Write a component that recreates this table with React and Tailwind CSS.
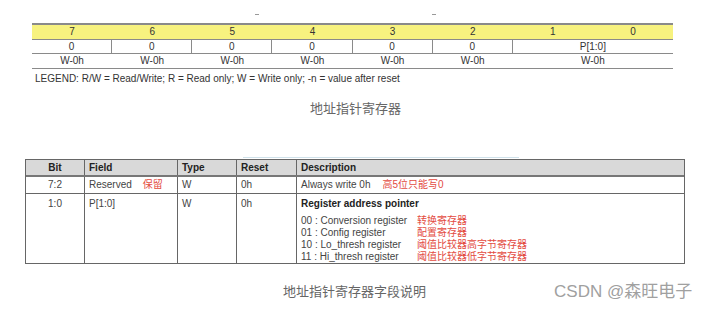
import React from "react";

const bits = ["7", "6", "5", "4", "3", "2", "1", "0"];

const pointerRows = [
  ["00 : Conversion register", "转换寄存器"],
  ["01 : Config register", "配置寄存器"],
  ["10 : Lo_thresh register", "阈值比较器高字节寄存器"],
  ["11 : Hi_thresh register", "阈值比较器低字节寄存器"],
];

function BitTable() {
  return (
    <div className="ml-[32px] w-[641px] border-t-2 border-b border-[#8a8a8a] text-[10px] leading-none text-[#333]">
      <div className="grid grid-cols-8 h-[14px] bg-[#f7f27f]">
        {bits.map((b) => (
          <div key={b} className="flex items-center justify-center">
            {b}
          </div>
        ))}
      </div>
      <div className="grid grid-cols-8 h-[14px] border-t border-[#8a8a8a]">
        {["0", "0", "0", "0", "0", "0"].map((v, i) => (
          <div
            key={i}
            className="flex items-center justify-center border-r border-[#8a8a8a]"
          >
            {v}
          </div>
        ))}
        <div className="col-span-2 flex items-center justify-center">P[1:0]</div>
      </div>
      <div className="grid grid-cols-8 h-[15px] border-t border-[#8a8a8a]">
        {[0, 1, 2, 3, 4, 5].map((i) => (
          <div key={i} className="flex items-center justify-center">
            W-0h
          </div>
        ))}
        <div className="col-span-2 flex items-center justify-center">W-0h</div>
      </div>
    </div>
  );
}

function FieldTable() {
  const cols = "grid grid-cols-[59px_93px_59px_60px_1fr]";
  const cell = "border-r border-[#666] px-[4px]";
  return (
    <div className="ml-[25px] w-[660px] border border-[#666] text-[10px] leading-none text-[#444]">
      <div className={`${cols} h-[17px] bg-[#d9d9d9] font-bold text-[#222] border-b-2 border-[#777]`}>
        <div className={`${cell} flex items-center justify-center`}>Bit</div>
        <div className={`${cell} flex items-center`}>Field</div>
        <div className={`${cell} flex items-center`}>Type</div>
        <div className={`${cell} flex items-center`}>Reset</div>
        <div className="px-[4px] flex items-center">Description</div>
      </div>
      <div className={`${cols} h-[17px] border-b border-[#666]`}>
        <div className={`${cell} flex items-center justify-center`}>7:2</div>
        <div className={`${cell} flex items-center`}>
          Reserved
          <span className="ml-[11px] text-[#e34b3f]">保留</span>
        </div>
        <div className={`${cell} flex items-center`}>W</div>
        <div className={`${cell} flex items-center`}>0h</div>
        <div className="px-[4px] flex items-center">
          Always write 0h
          <span className="ml-[12px] text-[#e34b3f]">高5位只能写0</span>
        </div>
      </div>
      <div className={`${cols} h-[69px]`}>
        <div className={`${cell} pt-[5px] text-center`}>1:0</div>
        <div className={`${cell} pt-[5px]`}>P[1:0]</div>
        <div className={`${cell} pt-[5px]`}>W</div>
        <div className={`${cell} pt-[5px]`}>0h</div>
        <div className="px-[4px] pt-[5px]">
          <div className="font-bold text-[#222]">Register address pointer</div>
          <div className="mt-[6px] flex flex-col">
            {pointerRows.map(([en, zh]) => (
              <div key={en} className="flex h-[12px] items-center">
                <span className="w-[116px]">{en}</span>
                <span className="text-[#e34b3f]">{zh}</span>
              </div>
            ))}
          </div>
        </div>
      </div>
    </div>
  );
}

export default function App() {
  return (
    <div
      className="w-[709px] h-[309px] bg-white overflow-hidden"
      style={{ fontFamily: '"Liberation Sans", "Noto Sans CJK SC", sans-serif' }}
    >
      <div className="h-[23px] flex items-start">
        <div className="ml-[255px] mt-[14px] w-[4px] h-px bg-[#999]" />
        <div className="ml-[173px] mt-[14px] w-[4px] h-px bg-[#999]" />
      </div>
      <BitTable />
      <div className="mt-[4px] ml-[35px] text-[10px] leading-[12px] text-[#333]">
        LEGEND: R/W = Read/Write; R = Read only; W = Write only; -n = value after reset
      </div>
      <div className="mt-[16px] ml-[310px] text-[13px] leading-[16px] text-[#666]">
        地址指针寄存器
      </div>
      <div className="mt-[40px] ml-[243px] w-[276px] h-px bg-[#cfe1ea]" />
      <div className="mt-[1px]">
        <FieldTable />
      </div>
      <div className="mt-[18px] flex items-center h-[20px]">
        <div className="ml-[283px] text-[13px] text-[#666]">地址指针寄存器字段说明</div>
        <div className="ml-[128px] text-[17px] text-[#a0a0a0]">CSDN @森旺电子</div>
      </div>
    </div>
  );
}
